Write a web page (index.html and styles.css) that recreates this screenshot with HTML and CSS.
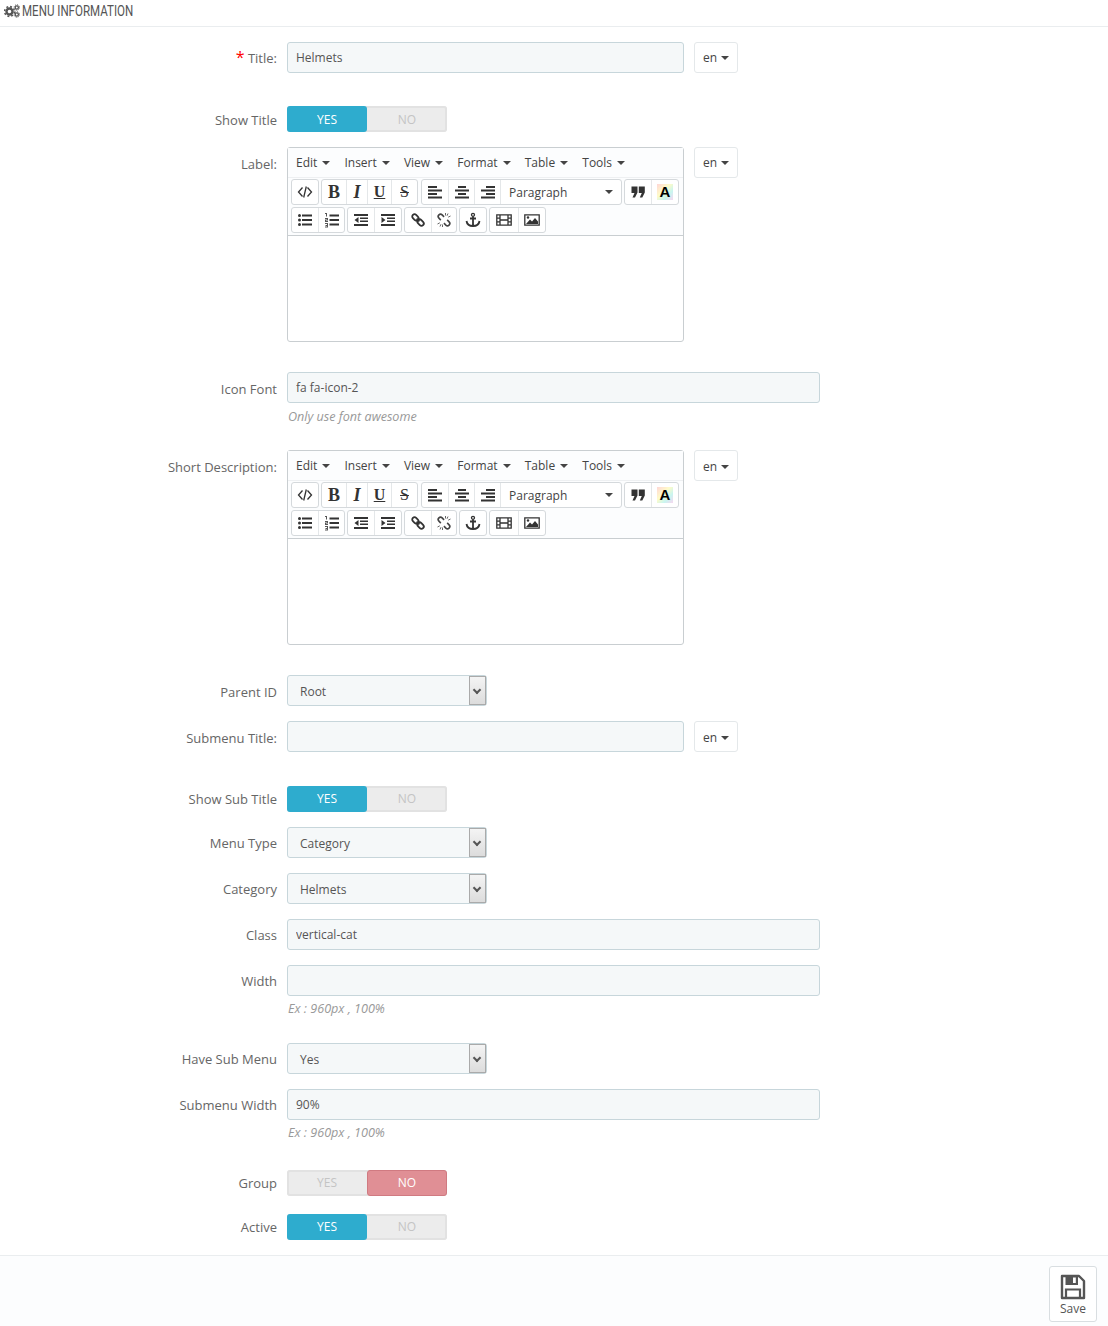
FILE: index.html
```html
<!DOCTYPE html>
<html lang="en">
<head>
    <meta charset="UTF-8">
    <title>Menu Information</title>
    <link rel="stylesheet" href="styles.css">
</head>
<body>
    <svg class="defs" width="0" height="0">
        <symbol id="i-code" viewBox="0 0 16 16"><path d="M5.500 3.500 1.500 8l4 4.500M10.500 3.500l4 4.500-4 4.500M9.300 2.500 6.700 13.500" fill="none" stroke="#333" stroke-width="1.300"/></symbol>
        <symbol id="i-left" viewBox="0 0 16 16"><path d="M1 2h9v2H1zM1 5.500h14v2H1zM1 9h9v2H1zM1 12.500h14v2H1z" fill="#333"/></symbol>
        <symbol id="i-center" viewBox="0 0 16 16"><path d="M4 2h8v2H4zM1 5.500h14v2H1zM4 9h8v2H4zM1 12.500h14v2H1z" fill="#333"/></symbol>
        <symbol id="i-right" viewBox="0 0 16 16"><path d="M6 2h9v2H6zM1 5.500h14v2H1zM6 9h9v2H6zM1 12.500h14v2H1z" fill="#333"/></symbol>
        <symbol id="i-quote" viewBox="0 0 16 16"><path d="M1.500 2.500h6v6L5 13.500H2.500L4.500 9h-3zM8.800 2.500h6v6l-2.500 5h-2.500l2-4.500h-3z" fill="#333"/></symbol>
        <symbol id="i-ul" viewBox="0 0 16 16"><path d="M5 2.500h10v2H5zM5 7h10v2H5zM5 11.500h10v2H5z" fill="#333"/><circle cx="2.500" cy="3.500" r="1.500" fill="#333"/><circle cx="2.500" cy="8" r="1.500" fill="#333"/><circle cx="2.500" cy="12.500" r="1.500" fill="#333"/></symbol>
        <symbol id="i-ol" viewBox="0 0 16 16"><path d="M5.500 2.500H15v2H5.500zM5.500 7H15v2H5.500zM5.500 11.500H15v2H5.500z" fill="#333"/><path d="M1 1h2v3.500H2V2H1zM1 6h3v2.500H2V9h2v1H1V7.500h2V7H1zM1 11h3v4.500H1v-1h2V14H1.500v-1H3v-1H1z" fill="#555"/></symbol>
        <symbol id="i-outdent" viewBox="0 0 16 16"><path d="M1 2h14v2H1zM7 5.500h8v1.500H7zM7 8.500h8V10H7zM1 12h14v2H1zM5.500 5v6L1.500 8z" fill="#333"/></symbol>
        <symbol id="i-indent" viewBox="0 0 16 16"><path d="M1 2h14v2H1zM7 5.500h8v1.500H7zM7 8.500h8V10H7zM1 12h14v2H1zM1.500 5v6l4-3z" fill="#333"/></symbol>
        <symbol id="i-link" viewBox="0 0 16 16"><g fill="none" stroke="#333" stroke-width="1.800" transform="rotate(45 8 8)"><rect x="0.800" y="5.700" width="7" height="4.600" rx="2.300"/><rect x="8.200" y="5.700" width="7" height="4.600" rx="2.300"/><path d="M6 8h4"/></g></symbol>
        <symbol id="i-unlink" viewBox="0 0 16 16"><g fill="none" stroke="#444" stroke-width="1.600"><path transform="rotate(45 8 8)" d="M5.800 5.700H3.100a2.300 2.300 0 0 0 0 4.600h2.700M10.200 5.700h2.700a2.300 2.300 0 0 1 0 4.600h-2.700"/></g><path d="M9.500 1v2.500M12 1.500 11 3.800M14.500 4l-2.300 1.200M6.500 15v-2.500M4 14.500 5 12.200M1.500 12l2.300-1.200" fill="none" stroke="#666" stroke-width="1"/></symbol>
        <symbol id="i-anchor" viewBox="0 0 16 16"><circle cx="8" cy="2.800" r="1.500" fill="none" stroke="#333" stroke-width="1.300"/><path d="M8 4.500v10M5 6.500h6M1.500 9c.5 3.500 3.500 5 6.500 5s6-1.500 6.500-5" fill="none" stroke="#333" stroke-width="1.800"/></symbol>
        <symbol id="i-film" viewBox="0 0 16 16"><path d="M.8 2.800h14.400v10.400H.8zM4 2.800v10.400M12 2.800v10.400M.8 6.200H4M.8 9.800H4M12 6.200h3.200M12 9.800h3.200M4 8h8" fill="none" stroke="#333" stroke-width="1.300"/></symbol>
        <symbol id="i-image" viewBox="0 0 16 16"><path d="M.8 2.800h14.400v10.400H.8z" fill="none" stroke="#333" stroke-width="1.300"/><path d="M2 12l4-4.500 2 2 3-3.500 3 3.500V12z" fill="#333"/><circle cx="4" cy="5.500" r="1.200" fill="#333"/></symbol>
    </svg>

    <h1 class="panel-title">
        <svg class="cogs" width="16" height="14" viewBox="0 0 16 14">
            <circle cx="5.500" cy="7.500" r="3" fill="none" stroke="#555" stroke-width="2.400"/>
            <circle cx="5.500" cy="7.500" r="4.900" fill="none" stroke="#555" stroke-width="1.600" stroke-dasharray="1.900 1.950"/>
            <circle cx="12.800" cy="3.500" r="1.600" fill="none" stroke="#555" stroke-width="1.300"/>
            <circle cx="12.800" cy="3.500" r="2.700" fill="none" stroke="#555" stroke-width="1" stroke-dasharray="1.100 1"/>
            <circle cx="12.800" cy="10.500" r="1.600" fill="none" stroke="#555" stroke-width="1.300"/>
            <circle cx="12.800" cy="10.500" r="2.700" fill="none" stroke="#555" stroke-width="1" stroke-dasharray="1.100 1"/>
        </svg>
        <span class="panel-name">MENU INFORMATION</span>
    </h1>

    <form class="form">
        <div class="row gap-33">
            <label class="label"><span class="req">*</span> Title:</label>
            <input class="input input-md" type="text" value="Helmets">
            <div class="lang">en <i class="caret"></i></div>
        </div>

        <div class="row">
            <label class="label label-switch label-low">Show Title</label>
            <div class="switch"><span class="on">YES</span><span>NO</span></div>
        </div>

        <div class="row gap-30">
            <label class="label label-low">Label:</label>
            <div class="editor">
                <div class="menubar">
                    <span>Edit <i class="caret"></i></span>
                    <span>Insert <i class="caret"></i></span>
                    <span>View <i class="caret"></i></span>
                    <span>Format <i class="caret"></i></span>
                    <span>Table <i class="caret"></i></span>
                    <span>Tools <i class="caret"></i></span>
                </div>
                <div class="toolbar">
                    <div class="tools">
                        <div class="group"><b class="tool"><svg><use href="#i-code"/></svg></b></div>
                        <div class="group">
                            <b class="tool tool-b">B</b>
                            <b class="tool tool-i">I</b>
                            <b class="tool tool-u">U</b>
                            <b class="tool tool-s">S</b>
                        </div>
                        <div class="group group-sep">
                            <b class="tool"><svg><use href="#i-left"/></svg></b>
                            <b class="tool"><svg><use href="#i-center"/></svg></b>
                            <b class="tool"><svg><use href="#i-right"/></svg></b>
                            <span class="format">Paragraph <i class="caret"></i></span>
                        </div>
                        <div class="group">
                            <b class="tool"><svg><use href="#i-quote"/></svg></b>
                            <b class="tool tool-wide"><span class="tool-a">A</span></b>
                        </div>
                    </div>
                    <div class="tools">
                        <div class="group">
                            <b class="tool"><svg><use href="#i-ul"/></svg></b>
                            <b class="tool"><svg><use href="#i-ol"/></svg></b>
                        </div>
                        <div class="group">
                            <b class="tool"><svg><use href="#i-outdent"/></svg></b>
                            <b class="tool tool-wide"><svg><use href="#i-indent"/></svg></b>
                        </div>
                        <div class="group">
                            <b class="tool"><svg><use href="#i-link"/></svg></b>
                            <b class="tool tool-thin"><svg><use href="#i-unlink"/></svg></b>
                        </div>
                        <div class="group"><b class="tool"><svg><use href="#i-anchor"/></svg></b></div>
                        <div class="group">
                            <b class="tool tool-wider"><svg><use href="#i-film"/></svg></b>
                            <b class="tool tool-wide"><svg><use href="#i-image"/></svg></b>
                        </div>
                    </div>
                </div>
                <div class="editor-body"></div>
            </div>
            <div class="lang">en <i class="caret"></i></div>
        </div>

        <div class="row has-help">
            <label class="label label-low">Icon Font</label>
            <div class="field">
                <input class="input input-lg" type="text" value="fa fa-icon-2">
                <p class="help help-low">Only use font awesome</p>
            </div>
        </div>

        <div class="row gap-30">
            <label class="label label-low">Short Description:</label>
            <div class="editor">
                <div class="menubar">
                    <span>Edit <i class="caret"></i></span>
                    <span>Insert <i class="caret"></i></span>
                    <span>View <i class="caret"></i></span>
                    <span>Format <i class="caret"></i></span>
                    <span>Table <i class="caret"></i></span>
                    <span>Tools <i class="caret"></i></span>
                </div>
                <div class="toolbar">
                    <div class="tools">
                        <div class="group"><b class="tool"><svg><use href="#i-code"/></svg></b></div>
                        <div class="group">
                            <b class="tool tool-b">B</b>
                            <b class="tool tool-i">I</b>
                            <b class="tool tool-u">U</b>
                            <b class="tool tool-s">S</b>
                        </div>
                        <div class="group group-sep">
                            <b class="tool"><svg><use href="#i-left"/></svg></b>
                            <b class="tool"><svg><use href="#i-center"/></svg></b>
                            <b class="tool"><svg><use href="#i-right"/></svg></b>
                            <span class="format">Paragraph <i class="caret"></i></span>
                        </div>
                        <div class="group">
                            <b class="tool"><svg><use href="#i-quote"/></svg></b>
                            <b class="tool tool-wide"><span class="tool-a">A</span></b>
                        </div>
                    </div>
                    <div class="tools">
                        <div class="group">
                            <b class="tool"><svg><use href="#i-ul"/></svg></b>
                            <b class="tool"><svg><use href="#i-ol"/></svg></b>
                        </div>
                        <div class="group">
                            <b class="tool"><svg><use href="#i-outdent"/></svg></b>
                            <b class="tool tool-wide"><svg><use href="#i-indent"/></svg></b>
                        </div>
                        <div class="group">
                            <b class="tool"><svg><use href="#i-link"/></svg></b>
                            <b class="tool tool-thin"><svg><use href="#i-unlink"/></svg></b>
                        </div>
                        <div class="group"><b class="tool"><svg><use href="#i-anchor"/></svg></b></div>
                        <div class="group">
                            <b class="tool tool-wider"><svg><use href="#i-film"/></svg></b>
                            <b class="tool tool-wide"><svg><use href="#i-image"/></svg></b>
                        </div>
                    </div>
                </div>
                <div class="editor-body"></div>
            </div>
            <div class="lang lang-low">en <i class="caret"></i></div>
        </div>

        <div class="row">
            <label class="label label-low">Parent ID</label>
            <div class="select">Root<i class="select-arrow"></i></div>
        </div>

        <div class="row gap-34">
            <label class="label label-low">Submenu Title:</label>
            <input class="input input-md" type="text">
            <div class="lang lang-low">en <i class="caret"></i></div>
        </div>

        <div class="row">
            <label class="label label-switch">Show Sub Title</label>
            <div class="switch"><span class="on">YES</span><span>NO</span></div>
        </div>

        <div class="row">
            <label class="label">Menu Type</label>
            <div class="select">Category<i class="select-arrow"></i></div>
        </div>

        <div class="row">
            <label class="label">Category</label>
            <div class="select">Helmets<i class="select-arrow"></i></div>
        </div>

        <div class="row">
            <label class="label">Class</label>
            <input class="input input-lg" type="text" value="vertical-cat">
        </div>

        <div class="row has-help">
            <label class="label">Width</label>
            <div class="field">
                <input class="input input-lg" type="text">
                <p class="help">Ex : 960px , 100%</p>
            </div>
        </div>

        <div class="row">
            <label class="label">Have Sub Menu</label>
            <div class="select">Yes<i class="select-arrow"></i></div>
        </div>

        <div class="row has-help gap-help-lg">
            <label class="label">Submenu Width</label>
            <div class="field">
                <input class="input input-lg" type="text" value="90%">
                <p class="help">Ex : 960px , 100%</p>
            </div>
        </div>

        <div class="row gap-18">
            <label class="label label-switch">Group</label>
            <div class="switch"><span>YES</span><span class="off">NO</span></div>
        </div>

        <div class="row">
            <label class="label label-switch">Active</label>
            <div class="switch"><span class="on">YES</span><span>NO</span></div>
        </div>
    </form>

    <div class="panel-footer">
        <button class="save" type="button">
            <svg width="26" height="26" viewBox="0 0 26 26">
                <path d="M2 2h17l5 5v17H2z" fill="none" stroke="#555" stroke-width="2.400" stroke-linejoin="round"/>
                <path d="M5.500 2h12.500v9H5.500z" fill="#555"/>
                <path d="M13 3.500h2.800v5.500H13z" fill="#fff"/>
                <path d="M6 15.500h14V24H6z" fill="none" stroke="#555" stroke-width="2.200"/>
            </svg>
            <span>Save</span>
        </button>
    </div>
</body>
</html>
```

FILE: styles.css
```css
* {
    box-sizing: border-box;
}

body {
    margin: 0;
    background: #FFF;
    color: #555;
    font-family: "Open Sans", "Liberation Sans", sans-serif;
    font-size: 13px;
}

.defs {
    position: absolute;
}

.panel-title {
    display: flex;
    align-items: center;
    gap: 2px;
    height: 27px;
    margin: 0;
    padding: 0 0 5px 4px;
    border-bottom: 1px solid #EAEDEF;
    font-weight: 400;
    color: #555;
}

.panel-name {
    font-family: Roboto, "Liberation Sans", sans-serif;
    font-size: 15px;
    transform: scaleX(0.77);
    transform-origin: left center;
    white-space: nowrap;
}

.form {
    padding-top: 15px;
}

.row {
    display: flex;
    align-items: flex-start;
    gap: 10px;
    margin-bottom: 15px;
}

.gap-18 { margin-bottom: 18px; }
.gap-30 { margin-bottom: 30px; }
.gap-33 { margin-bottom: 33px; }
.gap-34 { margin-bottom: 34px; }

.label {
    width: 277px;
    padding-top: 7px;
    line-height: 18px;
    text-align: right;
    color: #666;
}

.label-switch {
    padding-top: 4px;
}

.label-low {
    padding-top: 8px;
}

.label-switch.label-low {
    padding-top: 5px;
}

.label-low + .switch {
    line-height: 27px;
}

.req {
    color: #F00;
    font-size: 16px;
    line-height: 16px;
}

.input {
    height: 31px;
    padding: 0 8px;
    background: #F5F8F9;
    border: 1px solid #C7D6DB;
    border-radius: 3px;
    color: #555;
    font-family: inherit;
    font-size: 12px;
    outline: none;
}

.input-md {
    width: 397px;
}

.input-lg {
    width: 533px;
}

.help {
    margin: 4px 0 10px 1px;
    line-height: 18px;
    font-size: 12.6px;
    font-style: italic;
    color: #999;
}

.help-low {
    margin: 5px 0 9px 1px;
}

.gap-help-lg .help {
    margin-bottom: 13px;
}

.lang {
    width: 44px;
    height: 31px;
    background: #FFF;
    border: 1px solid #E4E8EA;
    border-radius: 3px;
    text-align: center;
    line-height: 29px;
    font-size: 12px;
    color: #444;
}

.lang-low {
    line-height: 31px;
}

.caret {
    display: inline-block;
    margin-left: 1px;
    vertical-align: 2px;
    border-top: 4px solid #444;
    border-left: 4px solid transparent;
    border-right: 4px solid transparent;
}

.switch {
    display: flex;
    width: 160px;
    height: 26px;
    background: #ECECEC;
    border-radius: 3px;
    box-shadow: inset 0 0 0 2px #E2E2E2;
    color: #C4C4C4;
    font-size: 12px;
    line-height: 25px;
    text-align: center;
}

.switch span {
    width: 80px;
}

.switch .on {
    background: #2EACCE;
    border-radius: 3px;
    color: #FFF;
}

.switch .off {
    background: #E08F95;
    border: 1px solid #D07A81;
    border-radius: 3px;
    line-height: 23px;
    color: #FFF;
}

.select {
    position: relative;
    width: 200px;
    height: 31px;
    padding-left: 12px;
    background: #F5F8F9;
    border: 1px solid #C7D6DB;
    border-radius: 3px;
    line-height: 31px;
    font-size: 12px;
    color: #555;
}

.select-arrow {
    position: absolute;
    top: 0;
    right: 0;
    width: 17px;
    height: 29px;
    background: linear-gradient(#F4F4F4, #DCDCDC);
    border: 1px solid #AAA;
}

.select-arrow::after {
    content: "";
    position: absolute;
    top: 10px;
    left: 4px;
    width: 4px;
    height: 4px;
    border-right: 2px solid #555;
    border-bottom: 2px solid #555;
    transform: rotate(45deg);
}

.editor {
    width: 397px;
    height: 195px;
    display: flex;
    flex-direction: column;
    border: 1px solid #C9CED1;
    border-radius: 3px;
    background: #FFF;
}

.menubar {
    display: flex;
    gap: 14px;
    height: 30px;
    padding: 0 8px;
    align-items: center;
    background: #FCFDFE;
    border-bottom: 1px solid #EEF0F2;
    font-size: 12px;
    color: #444;
}

.menubar .caret {
    margin-left: 2px;
}

.toolbar {
    height: 58px;
    padding: 1px 3px 0;
    background: #FCFDFE;
    border-bottom: 1px solid #C9CED1;
}

.tools {
    display: flex;
    gap: 2px;
    height: 26px;
    margin-bottom: 2px;
}

.group {
    display: flex;
    border: 1px solid #D5D9DC;
    border-radius: 3px;
    background: #FFF;
}

.group-sep {
    margin-left: 1px;
}

.tool {
    display: flex;
    align-items: center;
    justify-content: center;
    width: 26px;
    height: 24px;
    border-left: 1px solid #E4E7E9;
    font-family: "Liberation Serif", serif;
    font-size: 18px;
    color: #333;
}

.tool:first-child {
    border-left: none;
}

.tool svg {
    width: 16px;
    height: 16px;
}

.tool-wide { width: 27px; }
.tool-wider { width: 28px; }
.tool-thin { width: 25px; }

.tool-b { width: 24px; }
.tool-i { width: 21px; font-style: italic; }
.tool-u { width: 24px; font-size: 16px; text-decoration: underline; }
.tool-s { width: 26px; font-size: 16px; text-decoration: line-through; font-weight: 400; }

.tool-a {
    width: 16px;
    height: 16px;
    background: linear-gradient(135deg, #FFD6D6, #FFFBC8 40%, #C8F5F0 70%, #F7D6F0);
    font-family: "Liberation Sans", sans-serif;
    font-size: 15px;
    line-height: 16px;
    font-weight: 700;
    text-align: center;
    color: #000;
}

.format {
    display: flex;
    align-items: center;
    justify-content: space-between;
    width: 121px;
    padding: 0 8px 0 8px;
    border-left: 1px solid #E4E7E9;
    font-size: 12px;
    color: #444;
}

.editor-body {
    flex: 1;
}

.panel-footer {
    display: flex;
    justify-content: flex-end;
    height: 71px;
    padding: 10px 11px 0 0;
    background: #FCFDFE;
    border-top: 1px solid #EAEDEF;
}

.save {
    display: flex;
    flex-direction: column;
    align-items: center;
    width: 48px;
    height: 56px;
    padding: 7px 0 0;
    background: #FFF;
    border: 1px solid #D9DEE1;
    border-radius: 3px;
    font-family: inherit;
    font-size: 12px;
    color: #555;
}

.save span {
    line-height: 18px;
}
```
